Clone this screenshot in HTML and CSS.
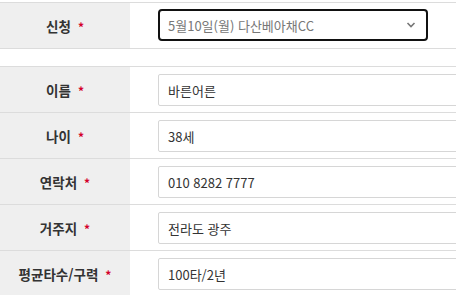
FILE: index.html
```html
<!DOCTYPE html>
<html lang="ko">
<head>
<meta charset="utf-8">
<link rel="stylesheet" href="styles.css">
</head>
<body>
<div class="page">
  <div class="form first">
    <div class="row">
      <div class="label">신청<span class="req">*</span></div>
      <div class="field">
        <div class="select">
          <span class="select-text">5월10일(월) 다산베아채CC</span>
          <svg class="chev" width="10" height="6" viewBox="0 0 10 6"><path d="M1.5 1 L5 4.5 L8.5 1" fill="none" stroke="#777" stroke-width="1.6"/></svg>
        </div>
      </div>
    </div>
  </div>
  <div class="spacer"></div>
  <div class="form">
    <div class="row">
      <div class="label">이름<span class="req">*</span></div>
      <div class="field"><div class="input">바른어른</div></div>
    </div>
    <div class="row">
      <div class="label">나이<span class="req">*</span></div>
      <div class="field"><div class="input">38세</div></div>
    </div>
    <div class="row">
      <div class="label">연락처<span class="req">*</span></div>
      <div class="field"><div class="input">010 8282 7777</div></div>
    </div>
    <div class="row">
      <div class="label">거주지<span class="req">*</span></div>
      <div class="field"><div class="input">전라도 광주</div></div>
    </div>
    <div class="row">
      <div class="label">평균타수/구력<span class="req">*</span></div>
      <div class="field"><div class="input">100타/2년</div></div>
    </div>
  </div>
</div>
</body>
</html>
```

FILE: styles.css
```css
html, body {
  margin: 0;
  padding: 0;
  background: #fff;
  overflow: hidden;
}
.page {
  width: 456px;
  padding-top: 2px;
  font-family: "Malgun Gothic", "Noto Sans CJK KR", "Noto Sans", sans-serif;
  font-size: 13px;
  color: #333;
}
.form {
  border-top: 1px solid #dcdcdc;
}
.row {
  display: grid;
  grid-template-columns: 130px 1fr;
  height: 45px;
  border-bottom: 1px solid #dcdcdc;
}
.label {
  background: #efefef;
  font-weight: bold;
  font-size: 13.5px;
  color: #333;
  display: flex;
  align-items: center;
  justify-content: center;
}
.req {
  color: #d4002a;
  font-size: 12px;
  margin-left: 7px;
  position: relative;
  top: 1px;
}
.field {
  padding: 7px 0 6px 28px;
  overflow: hidden;
}
.first .field {
  padding-top: 6px;
}
.input {
  box-sizing: border-box;
  width: 330px;
  height: 32px;
  border: 1px solid #d6d6d6;
  border-radius: 2px;
  padding: 0 9px;
  display: flex;
  align-items: center;
  color: #333;
}
.select {
  box-sizing: border-box;
  width: 270px;
  height: 32px;
  border: 2px solid #111;
  border-radius: 4px;
  padding: 0 9px 0 8px;
  display: flex;
  align-items: center;
  justify-content: space-between;
  color: #777;
}
.chev {
  margin-right: 1px;
}
.spacer {
  height: 17px;
}
```
